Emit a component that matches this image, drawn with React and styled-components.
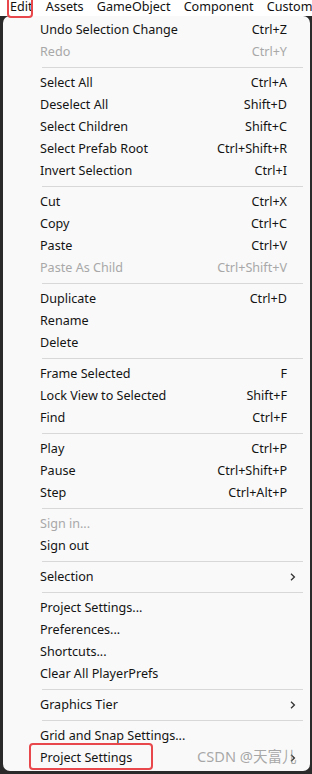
import React from "react";
import styled, { createGlobalStyle } from "styled-components";

const Global = createGlobalStyle`
  html, body { margin: 0; padding: 0; }
  body {
    width: 312px;
    height: 774px;
    overflow: hidden;
    background: #2a2a2a;
    font-family: "Noto Sans", "Noto Sans CJK SC", sans-serif;
  }
`;

const Page = styled.div`
  position: relative;
  width: 312px;
  height: 774px;
  background: #2a2a2a;
  overflow: hidden;
`;

const MenuBar = styled.div`
  display: flex;
  height: 16px;
  background: #ffffff;
  padding-left: 3.5px;
  overflow: hidden;
`;

const BarItem = styled.div`
  font-size: 12.6px;
  line-height: 13px;
  color: #111;
  padding: 0 6.6px;
  white-space: nowrap;
`;

const Panel = styled.div`
  margin-left: 3px;
  width: 307px;
  background: #f9f9f9;
  border-radius: 7px;
  padding: 3px 0 2px;
  box-sizing: border-box;
`;

const Row = styled.div`
  display: grid;
  grid-template-columns: 1fr auto 10px;
  align-items: center;
  height: 22px;
  padding: 0 13px 0 37px;
  font-size: 12.6px;
  line-height: 22px;
  color: ${(p) => (p.$disabled ? "#a8a8a8" : "#141414")};
  white-space: nowrap;
`;

const Shortcut = styled.span`
  text-align: right;
`;

const Arrow = styled.svg`
  justify-self: end;
  margin-right: 1px;
`;

const Sep = styled.div`
  height: 1px;
  background: #d8d8d8;
  margin: 4px 7px 4px 39px;
`;

const Highlight = styled.div`
  position: absolute;
  border: 2.5px solid #e8474b;
  border-radius: 4px;
  box-sizing: border-box;
`;

const Watermark = styled.div`
  position: absolute;
  left: 197px;
  top: 746px;
  font-size: 14.6px;
  line-height: 20px;
  color: rgba(140, 140, 140, 0.75);
  font-family: "Noto Sans", "Noto Sans CJK SC", sans-serif;
  white-space: nowrap;
`;

const Chevron = () => (
  <Arrow width="6" height="8" viewBox="0 0 6 8">
    <path d="M1 0.8 L4.4 4 L1 7.2" fill="none" stroke="#333" strokeWidth="1.3" />
  </Arrow>
);

const menu = [
  ["Undo Selection Change", "Ctrl+Z"],
  ["Redo", "Ctrl+Y", true],
  "-",
  ["Select All", "Ctrl+A"],
  ["Deselect All", "Shift+D"],
  ["Select Children", "Shift+C"],
  ["Select Prefab Root", "Ctrl+Shift+R"],
  ["Invert Selection", "Ctrl+I"],
  "-",
  ["Cut", "Ctrl+X"],
  ["Copy", "Ctrl+C"],
  ["Paste", "Ctrl+V"],
  ["Paste As Child", "Ctrl+Shift+V", true],
  "-",
  ["Duplicate", "Ctrl+D"],
  ["Rename", ""],
  ["Delete", ""],
  "-",
  ["Frame Selected", "F"],
  ["Lock View to Selected", "Shift+F"],
  ["Find", "Ctrl+F"],
  "-",
  ["Play", "Ctrl+P"],
  ["Pause", "Ctrl+Shift+P"],
  ["Step", "Ctrl+Alt+P"],
  "-",
  ["Sign in...", "", true],
  ["Sign out", ""],
  "-",
  ["Selection", "", false, true],
  "-",
  ["Project Settings...", ""],
  ["Preferences...", ""],
  ["Shortcuts...", ""],
  ["Clear All PlayerPrefs", ""],
  "-",
  ["Graphics Tier", "", false, true],
  "-",
  ["Grid and Snap Settings...", ""],
  ["Project Settings", "", false, true],
];

export default function App() {
  return (
    <>
      <Global />
      <Page>
        <MenuBar>
          {["Edit", "Assets", "GameObject", "Component", "Custom"].map((t) => (
            <BarItem key={t}>{t}</BarItem>
          ))}
        </MenuBar>
        <Panel>
          {menu.map((m, i) =>
            m === "-" ? (
              <Sep key={i} />
            ) : (
              <Row key={i} $disabled={m[2]}>
                <span>{m[0]}</span>
                <Shortcut>{m[1]}</Shortcut>
                {m[3] ? <Chevron /> : <span />}
              </Row>
            )
          )}
        </Panel>
        <Highlight style={{ left: 7, top: -4, width: 26, height: 22 }} />
        <Highlight style={{ left: 29, top: 743, width: 124, height: 27 }} />
        <Watermark>CSDN @天富儿</Watermark>
      </Page>
    </>
  );
}
